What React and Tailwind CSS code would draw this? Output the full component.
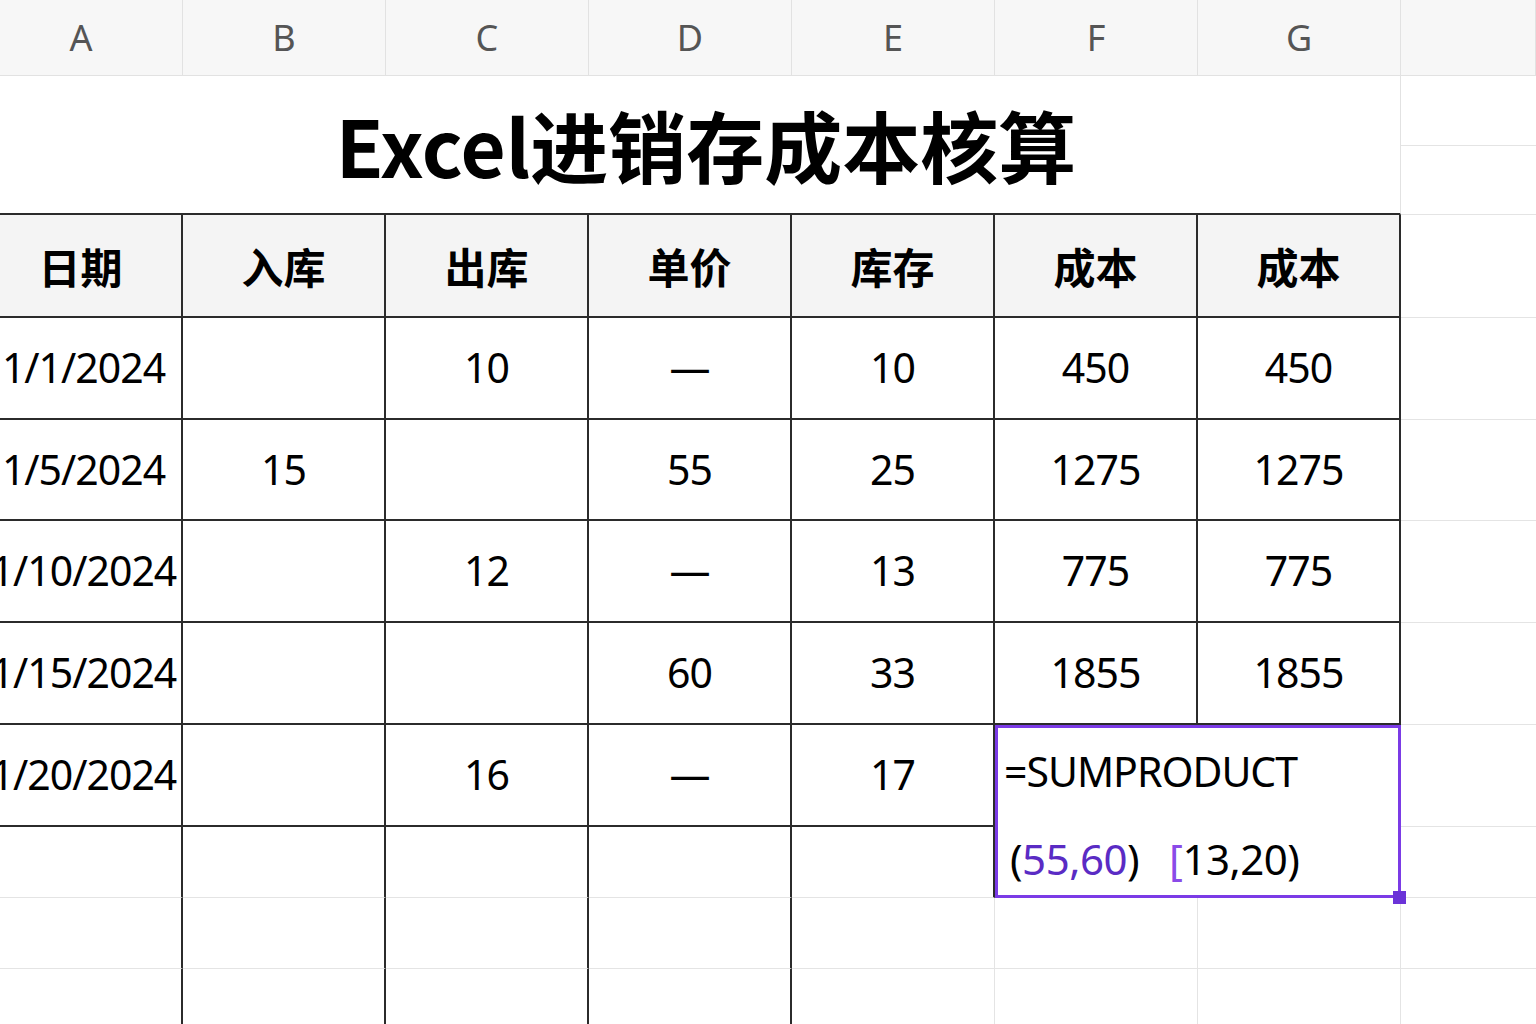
import React from "react";

const FONT = { fontFamily: '"Noto Sans", "Noto Sans CJK SC", sans-serif' };
const CJK = { fontFamily: '"Noto Sans CJK SC", "Noto Sans", sans-serif' };

const letters = ["A", "B", "C", "D", "E", "F", "G", ""];
const heads = ["日期", "入库", "出库", "单价", "库存", "成本", "成本"];
const rows = [
  ["1/1/2024", "", "10", "—", "10", "450", "450"],
  ["1/5/2024", "15", "", "55", "25", "1275", "1275"],
  ["1/10/2024", "", "12", "—", "13", "775", "775"],
  ["1/15/2024", "", "", "60", "33", "1855", "1855"],
];
const last = ["1/20/2024", "", "16", "—", "17"];

const dataCell =
  "flex items-center justify-center whitespace-nowrap bg-white border-r-2 border-b-2 border-[#2b2b2b] text-[41px] tracking-[-1px] text-black";
const dateCell =
  "flex items-center justify-center whitespace-nowrap bg-white border-r-2 border-b-2 border-[#2b2b2b] text-[41px] tracking-[-1px] text-black pl-[6px]";
const gridExtra = "bg-white border-b border-[#e4e4e4]";

export default function App() {
  return (
    <div className="w-[1536px] h-[1024px] overflow-hidden bg-white" style={FONT}>
      <div className="ml-[-20px] w-[1556px] grid grid-cols-[203px_203px_203px_203px_203px_203px_203px_1fr] grid-rows-[76px_70px_69px_103px_102px_101px_102px_102px_102px_71px_71px_71px]">
        {/* column header */}
        {letters.map((l, i) => (
          <div
            key={"h" + i}
            className="flex items-center justify-center bg-[#f7f7f7] border-r border-b border-[#e2e2e2] text-[36px] text-[#555555]"
          >
            {l}
          </div>
        ))}

        {/* title */}
        <div
          className="col-span-7 row-span-2 flex items-center justify-center pl-[32px] pb-[2px] bg-white border-r border-r-[#e2e2e2] border-b-2 border-b-[#2b2b2b] text-[78px] font-bold text-black leading-none"
          style={CJK}
        >
          Excel进销存成本核算
        </div>
        <div className={gridExtra}></div>
        <div className={gridExtra}></div>

        {/* table header */}
        {heads.map((h, i) => (
          <div
            key={"th" + i}
            className="flex items-center justify-center bg-[#f4f4f4] border-r-2 border-b-2 border-[#2b2b2b] text-[42px] font-bold text-black"
            style={CJK}
          >
            {h}
          </div>
        ))}
        <div className={gridExtra}></div>

        {/* data rows */}
        {rows.map((r, ri) => (
          <React.Fragment key={"r" + ri}>
            {r.map((c, ci) => (
              <div key={ci} className={ci === 0 ? dateCell : dataCell}>
                {c}
              </div>
            ))}
            <div className={gridExtra}></div>
          </React.Fragment>
        ))}

        {/* last data row A-E */}
        {last.map((c, ci) => (
          <div key={"l" + ci} className={ci === 0 ? dateCell : dataCell}>
            {c}
          </div>
        ))}

        {/* selection box F-G spanning two rows */}
        <div className="relative col-span-2 row-span-2 border-[3px] border-[#7b3be6] bg-white text-black">
          <div className="h-[88px] flex items-center pl-[6px] whitespace-nowrap text-[41px] tracking-[-1px]">=SUMPRODUCT</div>
          <div className="h-[84px] mt-[0px] flex items-center pl-[12px] whitespace-nowrap text-[42px] tracking-[-0.5px]">
            <span>(</span>
            <span className="text-[#5a2bc4]">55,60</span>
            <span>)</span>
            <span className="ml-[30px] text-[#8a4be8]">[</span>
            <span>13,20)</span>
          </div>
          <div className="absolute right-[-8px] bottom-[-9px] w-[13px] h-[13px] bg-[#6b33d8]"></div>
        </div>
        <div className={gridExtra}></div>

        {/* row after last data: A-E */}
        {[0, 1, 2, 3, 4].map((i) => (
          <div key={"e1" + i} className="bg-white border-r-2 border-r-[#2b2b2b] border-b border-b-[#e4e4e4]"></div>
        ))}
        <div className={gridExtra}></div>

        {/* two more empty rows */}
        {[0, 1].map((ri) => (
          <React.Fragment key={"er" + ri}>
            {[0, 1, 2, 3].map((i) => (
              <div key={i} className="bg-white border-r-2 border-r-[#2b2b2b] border-b border-b-[#e4e4e4]"></div>
            ))}
            <div className="bg-white border-r border-b border-[#e4e4e4]"></div>
            <div className="bg-white border-r border-b border-[#e4e4e4]"></div>
            <div className="bg-white border-r border-b border-[#e4e4e4]"></div>
            <div className={gridExtra}></div>
          </React.Fragment>
        ))}
      </div>
    </div>
  );
}
